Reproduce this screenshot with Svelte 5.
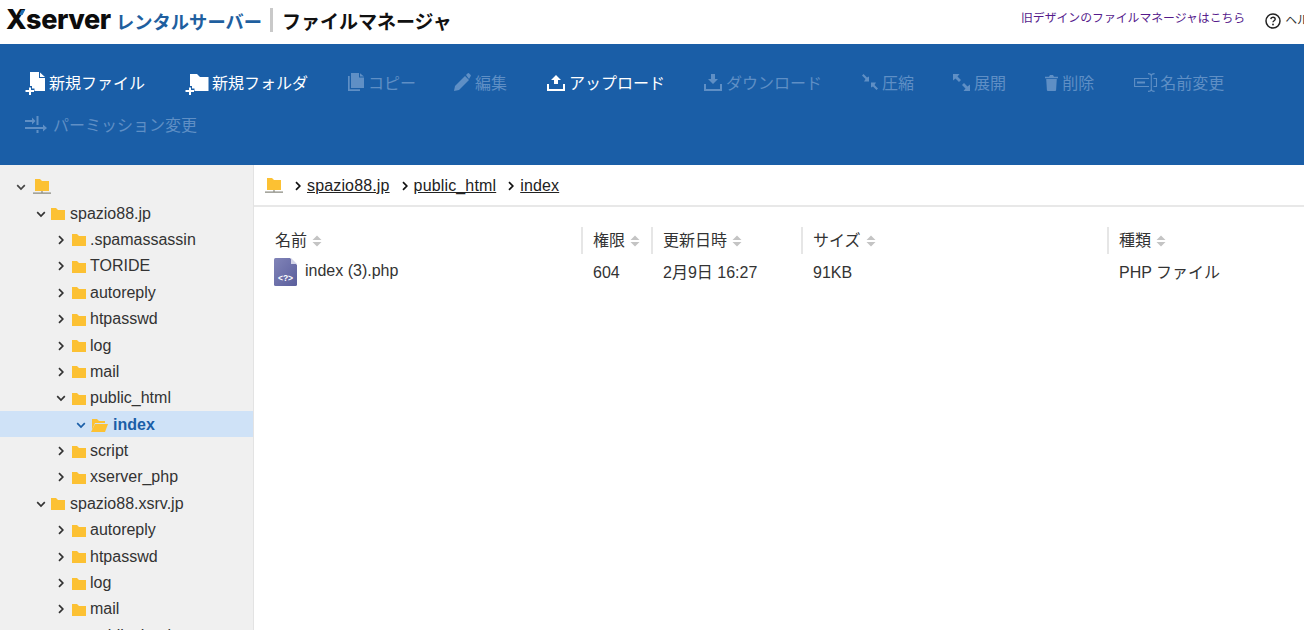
<script>
  const tools = [
    { label: '新規ファイル', icon: 'newfile', on: true, w: 24 },
    { label: '新規フォルダ', icon: 'newfolder', on: true, w: 27 },
    { label: 'コピー', icon: 'copy', w: 20 },
    { label: '編集', icon: 'edit', w: 21, ml: -2 },
    { label: 'アップロード', icon: 'upload', on: true, w: 22 },
    { label: 'ダウンロード', icon: 'download', w: 22, ml: -1 },
    { label: '圧縮', icon: 'compress', w: 20 },
    { label: '展開', icon: 'expand', w: 21, ml: -1 },
    { label: '削除', icon: 'trash', w: 17, ml: -1 },
    { label: '名前変更', icon: 'rename', w: 26 },
    { label: 'パーミッション変更', icon: 'perm', w: 28 }
  ];
  const tree = [
    { d: 1, n: 'spazio88.jp', open: true },
    { d: 2, n: '.spamassassin' },
    { d: 2, n: 'TORIDE' },
    { d: 2, n: 'autoreply' },
    { d: 2, n: 'htpasswd' },
    { d: 2, n: 'log' },
    { d: 2, n: 'mail' },
    { d: 2, n: 'public_html', open: true },
    { d: 3, n: 'index', open: true, sel: true },
    { d: 2, n: 'script' },
    { d: 2, n: 'xserver_php' },
    { d: 1, n: 'spazio88.xsrv.jp', open: true },
    { d: 2, n: 'autoreply' },
    { d: 2, n: 'htpasswd' },
    { d: 2, n: 'log' },
    { d: 2, n: 'mail' },
    { d: 2, n: 'public_html' }
  ];
  const heads = ['権限', '更新日時', 'サイズ', '種類'];
  const cells = ['604', '2月9日 16:27', '91KB', 'PHP ファイル'];
</script>

{#snippet chev(open, color)}
  <svg class="chev" width="10" height="10" viewBox="0 0 10 10" fill="none" stroke={color} stroke-width="1.7">
    {#if open}<path d="M1.2 3.2 5 7l3.8-3.8" />{:else}<path d="M3 1.2 6.8 5 3 8.8" />{/if}
  </svg>
{/snippet}

{#snippet netfolder()}
  <svg width="18" height="16" viewBox="0 0 18 16">
    <path d="M2 0h5l2 2h7v10H2z" fill="#fcc133" />
    <path d="M0 14.2h18M9 12v2.2" stroke="#8a8a80" stroke-width="1.2" fill="none" />
  </svg>
{/snippet}

{#snippet sortArrows()}
  <svg class="sort" width="10" height="12" viewBox="0 0 10 12" fill="#c4c4c4">
    <path d="M5 0.5 9.5 5h-9zM5 11.5.5 7h9z" />
  </svg>
{/snippet}

{#snippet toolIcon(name)}
  {#if name === 'newfile'}
    <svg width="21" height="23" viewBox="0 0 21 23" fill="currentColor"><path d="M5 1h9v6h6v13H5z" /><path d="M15 1.500 20 6h-5z" /><path d="M3 15h4v2.500h2.500v4H7V24H3v-2.500H-1v-4h4z" fill="#1a5ea7" /><path d="M4 16.500h2v2.500h3v2H6v3H4v-3H.5v-2H4z" /></svg>
  {:else if name === 'newfolder'}
    <svg width="24" height="23" viewBox="0 0 24 23" fill="currentColor"><path d="M5 3h7l3 3h8.500v14H5z" /><path d="M3 15h4v2.500h2.500v4H7V24H3v-2.500H-1v-4h4z" fill="#1a5ea7" /><path d="M4 16.500h2v2.500h3v2H6v3H4v-3H.5v-2H4z" /></svg>
  {:else if name === 'copy'}
    <svg width="16" height="18" viewBox="0 0 16 18" fill="currentColor"><path d="M3 0h8v4.500h5V15H3z" /><path d="M12 .3 16 3.500h-4z" /><path d="M0 3h1.700v13.300H12V18H0z" /></svg>
  {:else if name === 'edit'}
    <svg width="17" height="18" viewBox="0 0 17 18" fill="currentColor"><path d="M0 18l1-5L11 3l4 4L5 17z" /><path d="M12 2l1.500-1.500a1.200 1.200 0 0 1 1.700 0l1.300 1.300a1.200 1.200 0 0 1 0 1.700L15 6z" /></svg>
  {:else if name === 'upload'}
    <svg width="18" height="18" viewBox="0 0 18 18" fill="currentColor"><path d="M9 2l5 5h-3v4H7V7H4z" /><path d="M0 11h2v5h14v-5h2v7H0z" /></svg>
  {:else if name === 'download'}
    <svg width="18" height="18" viewBox="0 0 18 18" fill="currentColor"><path d="M7 1h4v5h3l-5 5-5-5h3z" /><path d="M0 11h2v5h14v-5h2v7H0z" /></svg>
  {:else if name === 'compress'}
    <svg width="16" height="16" viewBox="0 0 16 16" fill="currentColor"><path d="M1.500 0 5 3.500 7 2.500V7.500H2L3.500 5 0 1.500zM14.500 16 11 12.500 9 13.500V8.500H14L12.500 11 16 14.500z" /></svg>
  {:else if name === 'expand'}
    <svg width="17" height="17" viewBox="0 0 17 17" fill="currentColor"><path d="M0 0h6.500L4.500 2.500 8 6 6 8 2.500 4.500 0 6.500zM17 17h-6.500l2-2.500L9 11l2-2 3.500 3.500 2.500-2z" /></svg>
  {:else if name === 'trash'}
    <svg width="13" height="17" viewBox="0 0 13 17" fill="currentColor"><path d="M1.200 5h10.600l-.7 11a1 1 0 0 1-1 1H2.900a1 1 0 0 1-1-1z" /><path d="M0 2.700h4L5 1h3l1 1.700h4v1.500H0z" /></svg>
  {:else if name === 'rename'}
    <svg width="23" height="19" viewBox="0 0 23 19" fill="none" stroke="currentColor" stroke-width="1.100"><path d="M15 5.500H.6v8H15M19.500 5.500h3v8h-3" /><path d="M3 8.500h8v2H3z" fill="currentColor" stroke="none" /><path d="M14 .6c2 0 3.300.6 3.300 2.200v13.400c0 1.600-1.300 2.200-3.300 2.200M20.600.6c-2 0-3.300.6-3.300 2.200M20.600 18.400c-2 0-3.300-.6-3.300-2.200" /></svg>
  {:else if name === 'perm'}
    <svg width="22" height="17" viewBox="0 0 22 17" fill="currentColor"><path d="M0 4h8v2H0zM7 1.500l3.500 3.500L7 8.500zM11.500 0h2v9h-2zM0 11h19v2H0zM18 8.500l4 3.500-4 3.500zM11.500 14h2v3h-2z" /></svg>
  {/if}
{/snippet}

<div class="page">
  <header class="top">
    <div class="brand">
      <span class="logo">Xserver<svg class="accent" width="6" height="5" viewBox="0 0 6 5"><path d="M2.500 0H6L3.500 5H0z" fill="#1f6fb5" /></svg></span>
      <span class="sub">レンタルサーバー</span>
      <span class="divider"></span>
      <span class="title">ファイルマネージャ</span>
    </div>
    <div class="links">
      <span class="old">旧デザインのファイルマネージャはこちら</span>
      <span class="help">
        <svg width="16" height="16" viewBox="0 0 16 16"><circle cx="8" cy="8" r="7" fill="none" stroke="#222" stroke-width="1.500" /><path d="M5.800 6.200C6 4.800 7 4.300 8 4.300c1.300 0 2.200.8 2.200 1.900 0 1.500-2.200 1.600-2.200 3.100" fill="none" stroke="#222" stroke-width="1.400" /><circle cx="8" cy="11.500" r=".9" fill="#222" /></svg>
        ヘルプ
      </span>
    </div>
  </header>

  <nav class="toolbar">
    {#each tools as t}
      <span class="tool" class:on={t.on}>
        <span class="ico" style="width:{t.w}px;margin-left:{t.ml ?? 0}px">{@render toolIcon(t.icon)}</span>
        <span>{t.label}</span>
      </span>
    {/each}
  </nav>

  <div class="body">
    <aside class="side">
      <div class="row root">
        {@render chev(true, '#444')}
        {@render netfolder()}
      </div>
      {#each tree as r}
        <div class="row d{r.d}" class:sel={r.sel}>
          {@render chev(r.open, r.sel ? '#1a5ea7' : '#333')}
          {#if r.sel}
            <svg class="folder openf" width="17" height="14" viewBox="0 0 17 14"><path d="M1 1h5l2 2h6v2H4L1 12z" fill="#fcc133" /><path d="M4 6h13l-3 8H0z" fill="#fcc133" /></svg>
          {:else}
            <svg class="folder" width="14" height="13" viewBox="0 0 14 13"><path d="M0 1h5l2 2h7v10H0z" fill="#fcc133" /></svg>
          {/if}
          <span>{r.n}</span>
        </div>
      {/each}
    </aside>

    <main class="main">
      <div class="crumbs">
        {@render netfolder()}
        {@render chev(false, '#111')}
        <span class="crumb">spazio88.jp</span>
        {@render chev(false, '#111')}
        <span class="crumb">public_html</span>
        {@render chev(false, '#111')}
        <span class="crumb">index</span>
      </div>
      <div class="table">
        <div class="th first">名前 {@render sortArrows()}</div>
        {#each heads as h}
          <div class="th">{h} {@render sortArrows()}</div>
        {/each}
        <div class="td name">
          <svg width="23" height="28" viewBox="0 0 23 28">
            <defs><linearGradient id="fg" x1="0" y1="0" x2="1" y2="1"><stop offset="0" stop-color="#8184b8" /><stop offset="1" stop-color="#5a5e9c" /></linearGradient></defs>
            <path d="M0 1.500Q0 0 1.500 0H16l7 7v19.500q0 1.500-1.500 1.500h-20Q0 28 0 26.500z" fill="url(#fg)" />
            <path d="M17 0l6 6h-6z" fill="#d4d5e8" />
            <text x="11.500" y="23" text-anchor="middle" class="php">&lt;?&gt;</text>
          </svg>
          <span>index (3).php</span>
        </div>
        {#each cells as c}
          <div class="td">{c}</div>
        {/each}
      </div>
    </main>
  </div>
</div>

<style>
  :global(html), :global(body) {
    margin: 0;
    height: 100%;
    overflow: hidden;
  }
  .page {
    width: 1304px;
    height: 630px;
    overflow: hidden;
    display: flex;
    flex-direction: column;
    font-family: "Liberation Sans", "Noto Sans CJK JP", sans-serif;
    font-size: 16px;
    color: #333;
    background: #fff;
  }
  .top {
    height: 44px;
    flex: none;
    display: flex;
    justify-content: space-between;
    padding-left: 6px;
    box-sizing: border-box;
    overflow: hidden;
  }
  .brand {
    display: flex;
    align-items: center;
    padding-bottom: 4px;
    box-sizing: border-box;
  }
  .logo {
    position: relative;
    font-family: Inter, "Liberation Sans", sans-serif;
    font-weight: 800;
    font-size: 27px;
    line-height: 32px;
    letter-spacing: -0.45px;
    color: #0c0c0c;
    width: 111px;
  }
  .accent {
    position: absolute;
    left: 13px;
    top: 6px;
  }
  .sub {
    font-weight: 700;
    font-size: 18.300px;
    color: #1f5f9f;
    width: 145px;
    margin-left: -1px;
    white-space: nowrap;
    padding-top: 1px;
  }
  .divider {
    width: 3px;
    height: 24px;
    background: #c9c9c9;
    margin: 0 9px 0 9px;
  }
  .title {
    font-weight: 700;
    font-size: 19px;
    color: #111;
    white-space: nowrap;
    padding-top: 1px;
  }
  .links {
    display: flex;
    gap: 20px;
    font-size: 11.850px;
    padding-top: 10px;
    white-space: nowrap;
    width: 283px;
    flex: none;
    overflow: hidden;
  }
  .old { color: #551a8b; line-height: 16px; }
  .help {
    color: #333;
    display: flex;
    gap: 4px;
    line-height: 16px;
    padding-top: 2px;
  }
  .help svg { margin-top: 1px; }

  .toolbar {
    height: 121px;
    flex: none;
    box-sizing: border-box;
    background: #1a5ea7;
    padding: 17px 20px 0 25px;
    display: flex;
    flex-wrap: wrap;
    align-content: flex-start;
    column-gap: 40px;
    row-gap: 0;
    color: #5f8fc5;
  }
  .tool {
    height: 42px;
    display: flex;
    align-items: center;
    white-space: nowrap;
  }
  .ico {
    flex: none;
    display: flex;
    align-items: center;
  }
  .ico svg { flex: none; overflow: visible; }
  .tool.on { color: #fff; }

  .body {
    flex: 1;
    display: flex;
    min-height: 0;
  }
  .side {
    width: 254px;
    flex: none;
    box-sizing: border-box;
    background: #f0f0f0;
    border-right: 1px solid #e3e3e3;
    padding-top: 8px;
    overflow: hidden;
  }
  .row {
    height: 26.400px;
    box-sizing: border-box;
    padding-top: 2px;
    display: flex;
    align-items: center;
    white-space: nowrap;
    color: #333;
  }
  .chev { flex: none; }
  .row.root { padding-left: 16px; gap: 7px; }
  .row.d1 { padding-left: 36px; }
  .row.d2 { padding-left: 56px; }
  .row.d3 { padding-left: 76px; }
  .folder { flex: none; margin: 0 4px 0 6px; }
  .d1 .folder { margin-left: 5px; margin-right: 5px; }
  .openf { margin-right: 5px; margin-left: 5px; }
  .row.sel {
    background: #cfe2f7;
    color: #1a5ea7;
    font-weight: 700;
  }

  .main {
    flex: 1;
    min-width: 0;
  }
  .crumbs {
    height: 42px;
    box-sizing: border-box;
    border-bottom: 2px solid #e8e8e8;
    padding: 2px 0 0 11px;
    display: flex;
    align-items: center;
    color: #222;
  }
  .crumbs .chev { margin: 0 4px 0 10px; }
  .crumbs .crumb + .chev { margin-left: 10px; }
  .crumb { text-decoration: underline; letter-spacing: .15px; }

  .table {
    margin: 20px 0 0 10px;
    display: grid;
    grid-template-columns: 317px 70px 150px 306px 1fr;
    grid-template-rows: 27px 32px;
    row-gap: 4px;
    line-height: 20px;
  }
  .th {
    border-left: 2px solid #e6e6e6;
    padding-left: 10px;
    display: flex;
    align-items: center;
    gap: 5px;
    color: #333;
    white-space: nowrap;
  }
  .th.first {
    border-left: 0;
    padding-left: 11px;
  }
  .sort { flex: none; }
  .td {
    padding: 2px 0 0 12px;
    display: flex;
    align-items: center;
    color: #333;
    height: 26px;
  }
  .td.name {
    padding: 0 0 0 10px;
    height: 28px;
    gap: 8px;
  }
  .td.name span { margin-top: -2px; }
  .php {
    font-family: "Liberation Sans", sans-serif;
    font-weight: 700;
    font-size: 8.500px;
    fill: #fff;
  }
</style>
